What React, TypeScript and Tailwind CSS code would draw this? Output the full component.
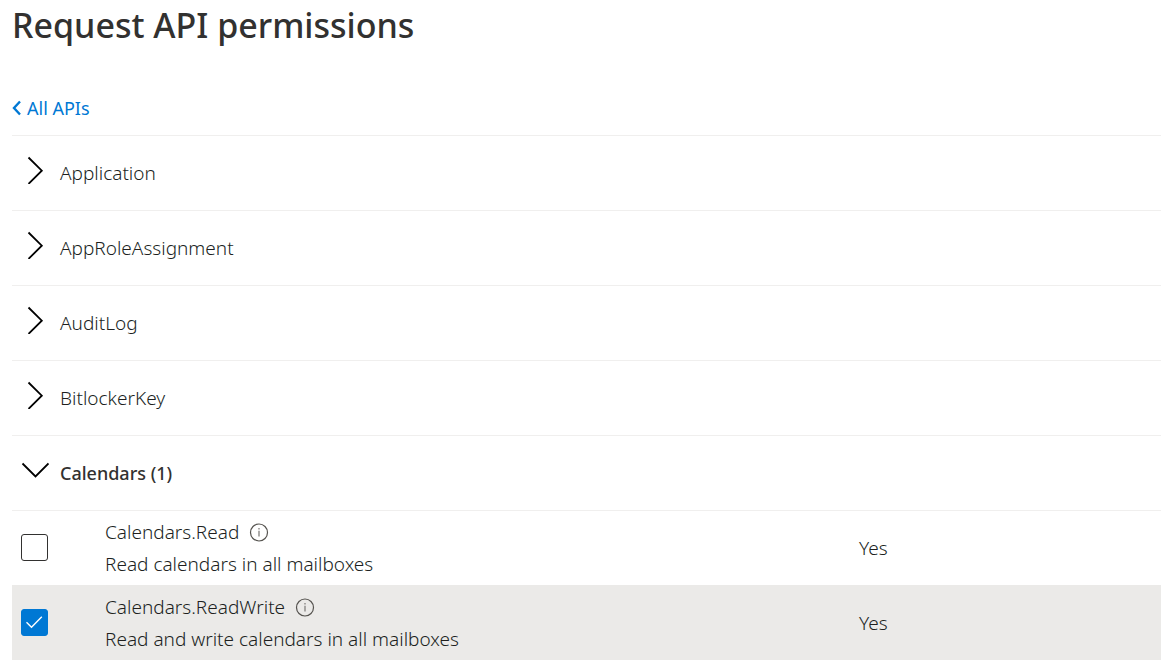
import { useState } from "react";

const collapsedGroups = ["Application", "AppRoleAssignment", "AuditLog", "BitlockerKey"];

const permissions = [
  { name: "Calendars.Read", description: "Read calendars in all mailboxes", consent: "Yes" },
  { name: "Calendars.ReadWrite", description: "Read and write calendars in all mailboxes", consent: "Yes" },
];

function Chevron({ open }: { open: boolean }) {
  return (
    <svg viewBox="0 0 28 28" className="size-7 shrink-0" fill="none" stroke="#000" strokeWidth="1.8" aria-hidden="true">
      {open ? <path d="M1.5 7.5 14.5 20.5 27.5 7.5" /> : <path d="M7.5 1.5 20.8 14.7 7.5 27.9" />}
    </svg>
  );
}

function InfoIcon() {
  return (
    <svg viewBox="0 0 20 20" className="size-5" fill="none" stroke="#55534f" aria-hidden="true">
      <circle cx="10" cy="10.5" r="8.5" strokeWidth="1.2" />
      <path d="M10 8.7v5.8M10 6v1.4" strokeWidth="1.4" stroke="#8a8886" />
    </svg>
  );
}

function GroupHeader({ label, open, onToggle }: { label: string; open: boolean; onToggle?: () => void }) {
  return (
    <button
      type="button"
      aria-expanded={open}
      onClick={onToggle}
      className={`flex h-[75px] w-full items-center gap-[11px] border-t border-[#f0efee] pl-[9px] text-left ${open ? "text-lg font-medium text-[#323130]" : ""}`}
    >
      <span className="flex w-7 pb-1.5">
        <Chevron open={open} />
      </span>
      <span>{label}</span>
    </button>
  );
}

export default function App() {
  const [selected, setSelected] = useState<string[]>(["Calendars.ReadWrite"]);
  const [open, setOpen] = useState(true);

  const toggle = (name: string) =>
    setSelected((current) =>
      current.includes(name) ? current.filter((item) => item !== name) : [...current, name],
    );

  return (
    <main className="bg-white pl-3 font-['Noto_Sans','Open_Sans',sans-serif] text-[19px] font-light text-[#201f1e]">
      <h1 className="pt-[3px] text-[34px] leading-[44px] font-medium text-[#323130]">Request API permissions</h1>
      <nav className="flex h-[88px] items-end pb-[11px]">
        <a href="#apis" className="flex items-center gap-1 text-lg leading-8 font-normal text-[#0078d4]">
          <svg viewBox="0 0 11 16" className="h-4 w-[11px]" fill="none" stroke="currentColor" strokeWidth="2.4" aria-hidden="true">
            <path d="M8 1.5 2 8l6 6.5" />
          </svg>
          All APIs
        </a>
      </nav>
      {collapsedGroups.map((label) => (
        <GroupHeader key={label} label={label} open={false} />
      ))}
      <GroupHeader label={`Calendars (${selected.length})`} open={open} onToggle={() => setOpen(!open)} />
      {open &&
        permissions.map(({ name, description, consent }) => {
          const checked = selected.includes(name);
          return (
            <div
              key={name}
              className={`grid h-[75px] grid-cols-[93px_754fr_302fr] items-center border-t ${checked ? "border-[#ebeae8] bg-[#ebeae8]" : "border-[#f0efee]"}`}
            >
              <div className="pb-0.5 pl-[9px]">
                <span className="relative block size-[27px]">
                  <input
                    id={name}
                    type="checkbox"
                    checked={checked}
                    onChange={() => toggle(name)}
                    className="block size-full appearance-none rounded-[3px] border border-[#323130] bg-white checked:border-[#0078d4] checked:bg-[#0078d4]"
                  />
                  {checked && (
                    <svg viewBox="0 0 27 27" className="pointer-events-none absolute inset-0" fill="none" stroke="#fff" strokeWidth="1.4" aria-hidden="true">
                      <path d="M5.5 13.2 10.5 18.2 20.8 7.8" />
                    </svg>
                  )}
                </span>
              </div>
              <div className="leading-8">
                <div className="flex items-center gap-2.5">
                  <label htmlFor={name}>{name}</label>
                  <button type="button" aria-label={`About ${name}`}>
                    <InfoIcon />
                  </button>
                </div>
                <p>{description}</p>
              </div>
              <span>{consent}</span>
            </div>
          );
        })}
    </main>
  );
}
